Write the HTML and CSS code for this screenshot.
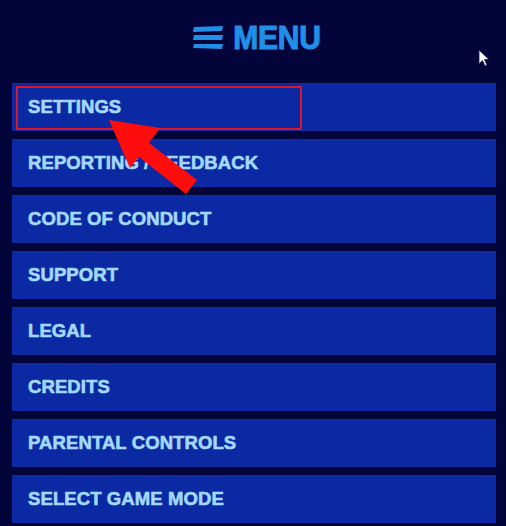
FILE: index.html
```html
<!DOCTYPE html>
<html>
<head>
<meta charset="utf-8">
<link rel="stylesheet" href="styles.css">
</head>
<body>
<div class="screen">
  <header class="header">
    <svg class="burger" width="30" height="24" viewBox="0 0 30 24">
      <polygon points="1,1 30,0 29,5 0,6" fill="#1f8fe8"/>
      <polygon points="1,9 30,9 29,14 0,14" fill="#1f8fe8"/>
      <polygon points="1,18 30,18 29,23 0,22" fill="#1f8fe8"/>
    </svg>
    <h1 class="title">MENU</h1>
  </header>
  <ul class="menu">
    <li class="item">SETTINGS<span class="highlight"></span></li>
    <li class="item">REPORTING / FEEDBACK</li>
    <li class="item">CODE OF CONDUCT</li>
    <li class="item">SUPPORT</li>
    <li class="item">LEGAL</li>
    <li class="item">CREDITS</li>
    <li class="item">PARENTAL CONTROLS</li>
    <li class="item">SELECT GAME MODE</li>
  </ul>
  <svg class="arrow" width="506" height="526" viewBox="0 0 506 526">
    <polygon points="109,120 160,128 149,143 197,180 186,194 139,157 130,168" fill="#ff0d0d"/>
  </svg>
  <svg class="cursor" width="12" height="18" viewBox="0 0 12 18">
    <polygon points="1,1 1,15 4.5,11.5 7,17 9,16 6.5,10.5 11,10.5" fill="#ffffff" stroke="#1a1a40" stroke-width="0.8"/>
  </svg>
</div>
</body>
</html>
```

FILE: styles.css
```css
html, body {
  margin: 0;
  padding: 0;
  background: #03043a;
}
.screen {
  position: relative;
  width: 506px;
  height: 526px;
  overflow: hidden;
  background: #03043a;
  font-family: "Liberation Sans", Arial, sans-serif;
}
.header {
  height: 76px;
  margin-bottom: 7px;
  display: flex;
  align-items: center;
  justify-content: center;
  gap: 10px;
  padding-left: 8px;
}
.burger {
  display: block;
}
.title {
  margin: 0;
  font-size: 30px;
  font-weight: bold;
  color: #1f8fe8;
  letter-spacing: -0.2px;
  line-height: 1;
  -webkit-text-stroke: 1px #1f8fe8;
  transform: scaleY(1.08);
}
.menu {
  list-style: none;
  margin: 0;
  padding: 0 10px 0 12px;
  display: flex;
  flex-direction: column;
  gap: 8px;
}
.item {
  position: relative;
  height: 48px;
  background: #0b29a3;
  display: flex;
  align-items: center;
  padding-left: 16px;
  color: #a3d9ff;
  font-size: 18.5px;
  font-weight: bold;
  letter-spacing: 0.1px;
  -webkit-text-stroke: 0.6px #a3d9ff;
}
.highlight {
  position: absolute;
  left: 4px;
  top: 3px;
  width: 282px;
  height: 40px;
  border: 2px solid #d8172b;
}
.arrow {
  position: absolute;
  left: 0;
  top: 0;
}
.cursor {
  position: absolute;
  left: 478px;
  top: 49px;
}
```
